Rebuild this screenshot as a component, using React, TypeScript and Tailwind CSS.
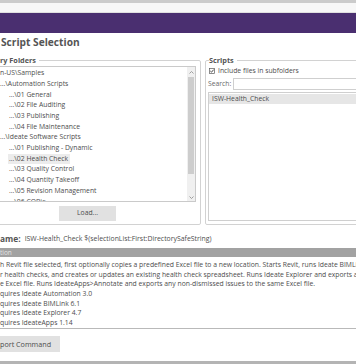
const FOLDERS = [
	{ label: 'n-US\\Samples', level: 0 },
	{ label: '...\\Automation Scripts', level: 1 },
	{ label: '...\\01 General', level: 2 },
	{ label: '...\\02 File Auditing', level: 2 },
	{ label: '...\\03 Publishing', level: 2 },
	{ label: '...\\04 File Maintenance', level: 2 },
	{ label: '...\\Ideate Software Scripts', level: 1 },
	{ label: '...\\01 Publishing - Dynamic', level: 2 },
	{ label: '...\\02 Health Check', level: 2, selected: true },
	{ label: '...\\03 Quality Control', level: 2 },
	{ label: '...\\04 Quantity Takeoff', level: 2 },
	{ label: '...\\05 Revision Management', level: 2 },
	{ label: '...\\06 COBie', level: 2 }
]

const DESCRIPTION = [
	'h Revit file selected, first optionally copies a predefined Excel file to a new location. Starts Revit, runs Ideate BIMLink',
	'r health checks, and creates or updates an existing health check spreadsheet. Runs Ideate Explorer and exports any',
	'e Excel file. Runs IdeateApps>Annotate and exports any non-dismissed issues to the same Excel file.',
	'quires Ideate Automation 3.0',
	'quires Ideate BIMLink 6.1',
	'quires Ideate Explorer 4.7',
	'quires IdeateApps 1.14'
]

function ScrollBar() {
	return (
		<div className="flex w-[8px] shrink-0 flex-col bg-[#f0f0f0]">
			<div className="flex h-[10px] items-center justify-center">
				<svg width="5" height="3" viewBox="0 0 5 3">
					<path d="M0.5 2.5 L2.5 0.5 L4.5 2.5" fill="none" stroke="#8a8a8a" strokeWidth="0.8" />
				</svg>
			</div>
			<div className="mx-[1px] h-[97px] bg-[#cdcdcd]" />
			<div className="flex-1" />
			<div className="flex h-[8px] items-center justify-center">
				<svg width="5" height="3" viewBox="0 0 5 3">
					<path d="M0.5 0.5 L2.5 2.5 L4.5 0.5" fill="none" stroke="#8a8a8a" strokeWidth="0.8" />
				</svg>
			</div>
		</div>
	)
}

function FolderList() {
	return (
		<div className="flex h-[136px] overflow-hidden border border-[#cacaca]">
			<div className="flex-1 overflow-hidden pt-[1px]">
				{FOLDERS.map((f) => (
					<div
						key={f.label}
						className={
							f.level === 2
								? 'ml-[11px] flex h-[10.7px] items-center'
								: 'ml-[2px] flex h-[10.7px] items-center'
						}
					>
						<span
							className={
								f.selected
									? '-ml-[1px] bg-[#ececec] pr-[2px] pl-[1px] whitespace-nowrap'
									: 'whitespace-nowrap'
							}
						>
							{f.label}
						</span>
					</div>
				))}
			</div>
			<ScrollBar />
		</div>
	)
}

export default function App() {
	return (
		<div className="flex h-[364px] w-[356px] flex-col overflow-hidden bg-white font-['Open_Sans',sans-serif] text-[6.8px] text-[#4d4d4d]">
			<div className="h-[3px] shrink-0 bg-[#cbcbcb]" />
			<div className="h-[10px] shrink-0 border-b border-[#e0e0e0] bg-[#f7f7f7]" />
			<div className="h-[20px] shrink-0 bg-[#4a2f70]" />
			<div className="mb-[1px] flex h-[20px] shrink-0 items-center pl-[1px] text-[10.2px] font-bold text-[#555]">
				Script Selection
			</div>

			<div className="-ml-[4px] flex w-[380px] shrink-0 gap-[4px]">
				<fieldset className="w-[205px] shrink-0 rounded-[2px] border border-[#d2d2d2] pr-[4px] pb-[3px]">
					<legend className="ml-[3px] pr-[3px] text-[7.3px] leading-[12px] font-bold text-[#555]">
						ry Folders
					</legend>
					<FolderList />
					<button className="mt-[4px] ml-[62px] flex h-[15px] w-[57px] items-center justify-center bg-[#e1e1e1] text-[#4d4d4d]">
						Load...
					</button>
				</fieldset>

				<fieldset className="flex-1 rounded-[2px] border border-[#d2d2d2] pb-[3px] pl-[2px]">
					<legend className="ml-[1px] pr-[3px] text-[7.3px] leading-[12px] font-bold text-[#555]">
						Scripts
					</legend>
					<div className="flex h-[10px] items-center gap-[3px] pl-[1px]">
						<svg width="6" height="6" viewBox="0 0 6 6">
							<rect x="0.5" y="0.5" width="5" height="5" fill="white" stroke="#5a5a5a" strokeWidth="0.7" />
							<path d="M1.3 3 L2.5 4.2 L4.7 1.6" fill="none" stroke="#333" strokeWidth="0.9" />
						</svg>
						<span>Include files in subfolders</span>
					</div>
					<div className="mt-[2px] flex h-[12px] items-center">
						<span className="w-[25px] text-[#6a6a6a]">Search:</span>
						<div className="h-full flex-1 border border-[#cfcfcf]" />
					</div>
					<div className="mt-[2px] h-[129px] border border-[#cfcfcf] pt-[1px]">
						<div className="flex h-[10px] items-center bg-[#e6e6e6] pl-[3px]">ISW-Health_Check</div>
					</div>
				</fieldset>
			</div>

			<div className="mt-[9px] flex h-[10px] shrink-0 items-center gap-[4px] whitespace-nowrap text-[6.9px]">
				<span className="text-[8.4px] font-bold text-[#555]">ame:</span>
				<span>ISW-Health_Check $(selectionList:First:DirectorySafeString)</span>
			</div>

			<div className="mt-[4px] flex h-[9px] shrink-0 items-center bg-[#a2a2a2] text-[6.5px] text-[#e4e4e4]">
				tion
			</div>
			<div className="h-[72px] shrink-0 overflow-hidden border-b border-[#b9b9b9] pt-[3px]">
				{DESCRIPTION.map((line) => (
					<div key={line} className="h-[9.7px] leading-[9.7px] whitespace-nowrap">
						{line}
					</div>
				))}
			</div>

			<button className="mt-[7px] flex h-[16px] w-[60px] shrink-0 items-center bg-[#e1e1e1] text-[7.2px] text-[#4d4d4d]">
				port Command
			</button>

			<div className="mt-auto h-[3px] shrink-0 bg-[#b4b4b4]" />
		</div>
	)
}
